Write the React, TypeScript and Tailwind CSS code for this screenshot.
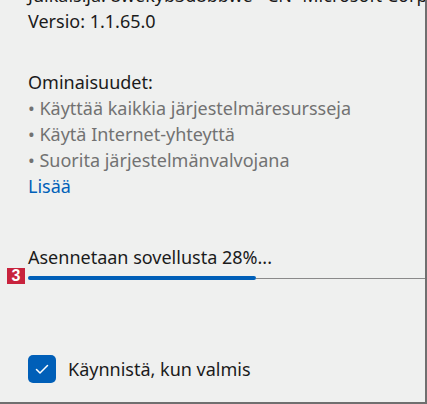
import React from "react";

const features = [
  "Käyttää kaikkia järjestelmäresursseja",
  "Käytä Internet-yhteyttä",
  "Suorita järjestelmänvalvojana",
];

export default function App() {
  const progress = 28;

  return (
    <div className="h-[404px] w-[427px] overflow-hidden border-r-2 border-b-2 border-[#6f6f6f] bg-[#eff0ef] pl-[28px] font-['Noto_Sans',sans-serif] text-[18px] leading-[26px] text-[#1b1b1b]">
      {/* previous line, scrolled mostly out of view */}
      <p className="-mt-[16px] whitespace-nowrap leading-[22px]">
        Julkaisija: 8wekyb3d8bbwe · CN=Microsoft Corporation, O=Microsoft Corporation, L=Redmond
      </p>
      <p className="mt-[2px]">Versio: 1.1.65.0</p>

      <div className="mt-[35px]">
        <p>Ominaisuudet:</p>
        <ul className="text-[#727272]">
          {features.map((f) => (
            <li key={f}>• {f}</li>
          ))}
        </ul>
        <a className="text-[#005fb8]">Lisää</a>
      </div>

      <p className="mt-[45px]">Asennetaan sovellusta {progress}%...</p>
      <div className="relative mt-[6px] flex h-[4px] items-center">
        <span className="absolute -left-[21px] -top-[8px] flex h-[16px] w-[18px] items-center justify-center bg-[#c8233d] font-['Liberation_Sans',sans-serif] text-[16px] font-bold leading-none text-white">
          3
        </span>
        <div className="h-[4px] w-[228px] rounded-full bg-[#005fb8]" />
        <div className="h-px flex-1 bg-[#8a8a8a]" />
      </div>

      <label className="mt-[75px] flex items-center gap-[12px]">
        <span className="flex h-[28px] w-[28px] items-center justify-center rounded-[5px] bg-[#005fb8]">
          <svg width="16" height="16" viewBox="0 0 16 16" fill="none">
            <path
              d="M2.5 8.5l3.5 3.5 7.5-7.5"
              stroke="white"
              strokeWidth="1.5"
              strokeLinecap="round"
              strokeLinejoin="round"
            />
          </svg>
        </span>
        <span>Käynnistä, kun valmis</span>
      </label>
    </div>
  );
}
